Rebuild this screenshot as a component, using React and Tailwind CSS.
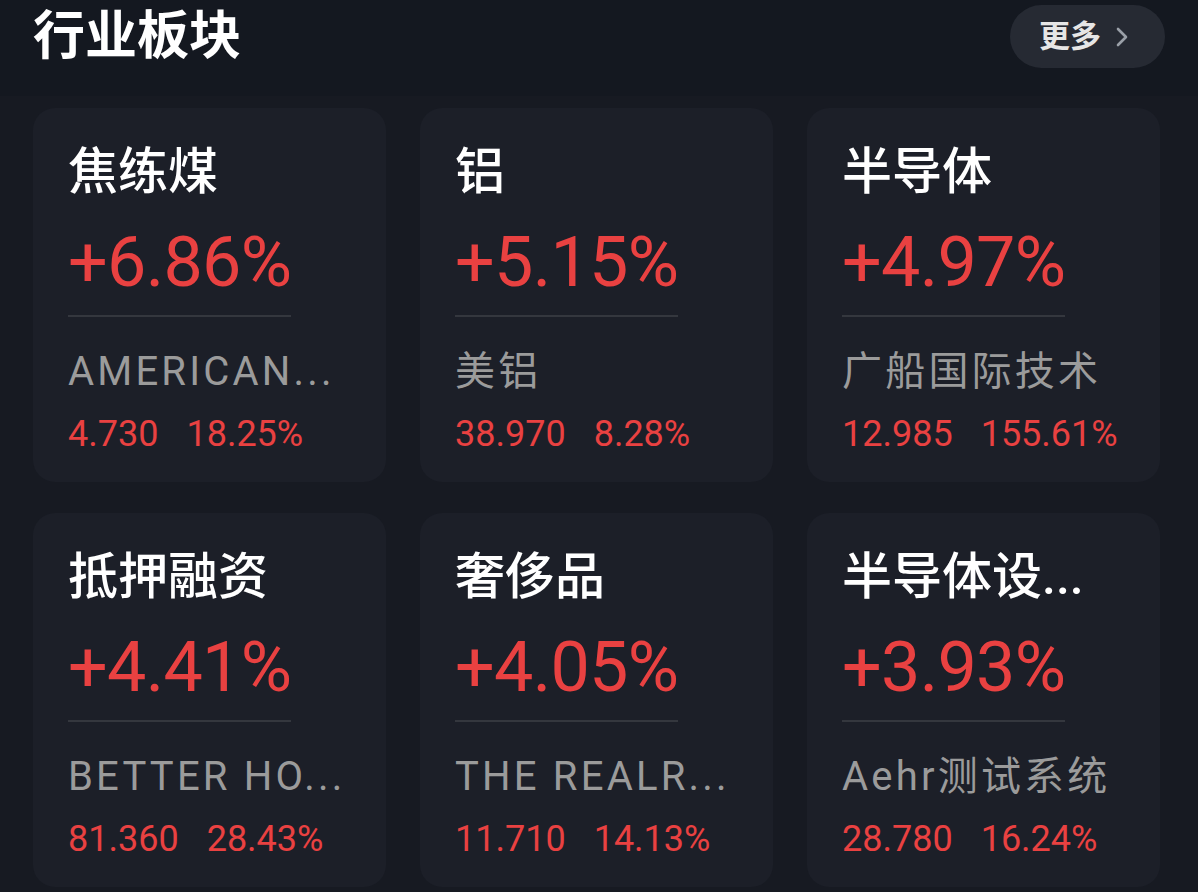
import React from 'react';

const sectors = [
  { name: '焦练煤', change: '+6.86%', stock: 'AMERICAN...', price: '4.730', pct: '18.25%' },
  { name: '铝', change: '+5.15%', stock: '美铝', price: '38.970', pct: '8.28%' },
  { name: '半导体', change: '+4.97%', stock: '广船国际技术', price: '12.985', pct: '155.61%' },
  { name: '抵押融资', change: '+4.41%', stock: 'BETTER HO...', price: '81.360', pct: '28.43%' },
  { name: '奢侈品', change: '+4.05%', stock: 'THE REALR...', price: '11.710', pct: '14.13%' },
  { name: '半导体设...', change: '+3.93%', stock: 'Aehr测试系统', price: '28.780', pct: '16.24%' },
];

const font = { fontFamily: 'Roboto, "Noto Sans CJK SC", sans-serif' };

const SectorCard = ({ item }) => (
  <div className="bg-[#1c1f28] rounded-[22px] pl-[35px] pr-[30px] pt-[34px] pb-[28px] flex flex-col">
    <div className="text-[50px] leading-[60px] font-medium text-white whitespace-nowrap">{item.name}</div>
    <div className="mt-[21px] text-[70px] leading-[78px] text-[#e94141] tracking-[-0.01em]">{item.change}</div>
    <div className="mt-[14px] h-[2px] w-[223px] bg-[#34373e]" />
    <div className="mt-[31px] text-[40px] leading-[48px] text-[#9b9b9b] tracking-[0.08em] whitespace-nowrap">
      {item.stock}
    </div>
    <div className="mt-[18px] flex gap-[28px] text-[36px] leading-[40px] text-[#e94141]">
      <span>{item.price}</span>
      <span>{item.pct}</span>
    </div>
  </div>
);

const App = () => {
  return (
    <div className="w-[1198px] h-[892px] bg-[#171a22] overflow-hidden" style={font}>
      {/* Header */}
      <div className="h-[96px] bg-[#141820] flex items-start justify-between pl-[33px] pr-[33px] pt-[5px]">
        <h1 className="text-[52px] leading-[63px] font-bold text-white">行业板块</h1>
        <button className="h-[63px] w-[155px] rounded-full bg-[#262a33] flex items-center pl-[29px] gap-[14px]">
          <span className="text-[31px] font-bold text-[#e6e6e6] leading-none">更多</span>
          <svg width="14" height="24" viewBox="0 0 14 24" fill="none">
            <polyline points="3,4 11,12 3,20" stroke="#9aa0a8" strokeWidth="2.6" strokeLinecap="round" strokeLinejoin="round" />
          </svg>
        </button>
      </div>

      {/* Cards */}
      <div className="pl-[33px] pr-[38px] pt-[12px] grid grid-cols-3 gap-x-[34px] gap-y-[31px]">
        {sectors.map((s) => (
          <SectorCard key={s.name} item={s} />
        ))}
      </div>
    </div>
  );
};

export default App;
